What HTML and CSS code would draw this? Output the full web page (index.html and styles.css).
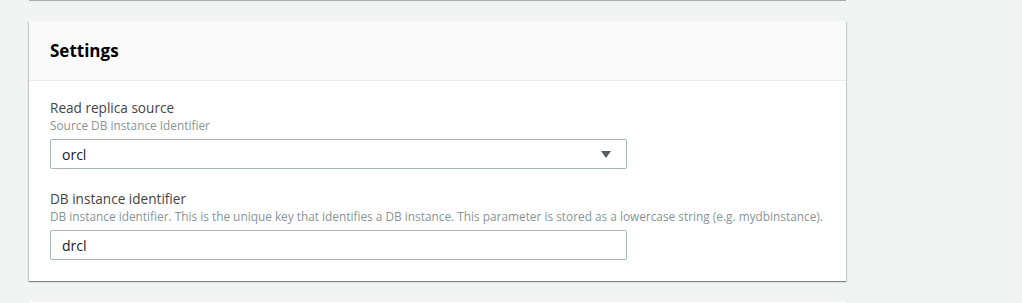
FILE: index.html
```html
<!DOCTYPE html>
<html lang="en">
<head>
    <meta charset="UTF-8">
    <title>Settings</title>
    <link rel="stylesheet" href="styles.css">
</head>
<body>
    <div class="page">
        <div class="card-end"></div>

        <div class="card">
            <div class="card-header">
                <h2>Settings</h2>
            </div>
            <div class="card-body">
                <div class="field">
                    <label class="field-label">Read replica source</label>
                    <div class="field-desc">Source DB instance Identifier</div>
                    <div class="select">
                        <span>orcl</span>
                        <span class="caret"></span>
                    </div>
                </div>
                <div class="field">
                    <label class="field-label">DB instance identifier</label>
                    <div class="field-desc">DB instance identifier. This is the unique key that identifies a DB instance. This parameter is stored as a lowercase string (e.g. mydbinstance).</div>
                    <div class="input">drcl</div>
                </div>
            </div>
        </div>

        <div class="card next"></div>
    </div>
</body>
</html>
```

FILE: styles.css
```css
body {
    margin: 0;
    background-color: #f2f3f3;
    font-family: "Open Sans", Arial, sans-serif;
    color: #444;
}
.page {
    width: 817px;
    padding-left: 29px;
}
.card-end {
    height: 1px;
    background-color: #a4acae;
    margin-bottom: 20px;
}
.card {
    background-color: #fff;
    box-shadow: 0 1px 1px 0 rgba(0,28,36,0.3), 1px 1px 1px 0 rgba(0,28,36,0.15), -1px 1px 1px 0 rgba(0,28,36,0.15);
}
.card-header {
    background-color: #fafafa;
    border-bottom: 1px solid #eaeded;
    height: 59px;
    padding: 0 21px;
    display: flex;
    align-items: center;
}
.card-header h2 {
    margin: 0;
    font-size: 17px;
    font-weight: bold;
    color: #000;
}
.card-body {
    padding: 17px 21px 21px;
}
.field + .field {
    margin-top: 20px;
}
.field-label {
    display: block;
    font-size: 13.6px;
    line-height: 20px;
    color: #444;
}
.field-desc {
    font-size: 11.85px;
    line-height: 14px;
    color: #879596;
    margin-bottom: 7px;
}
.select, .input {
    width: 553px;
    height: 28px;
    border: 1px solid #aab7b8;
    border-radius: 2px;
    padding: 0 11px;
    display: flex;
    align-items: center;
    justify-content: space-between;
    font-size: 14px;
    color: #16191f;
}
.caret {
    width: 0;
    height: 0;
    border-left: 5px solid transparent;
    border-right: 5px solid transparent;
    border-top: 7px solid #545b64;
    margin-right: 4px;
}
.next {
    margin-top: 21px;
    height: 10px;
}
```
